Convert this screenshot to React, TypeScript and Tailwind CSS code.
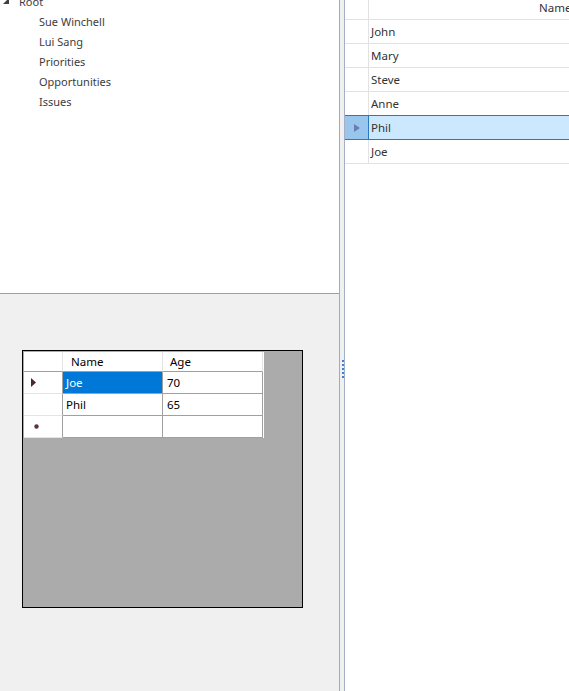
import React from "react";

const font = { fontFamily: '"Segoe UI", "Noto Sans", "Open Sans", sans-serif' };

function TreeRow({ label, indent }: { label: string; indent: boolean }) {
  return (
    <div className="h-[20px] flex items-center">
      {indent ? (
        <div className="w-[39px]" />
      ) : (
        <div className="w-[19px] flex items-center pl-[3px]">
          <svg width="6" height="6" viewBox="0 0 6 6">
            <polygon points="6,0 6,6 0,6" fill="#404040" />
          </svg>
        </div>
      )}
      <span className="text-[11px] text-[#3c3c3c] leading-none">{label}</span>
    </div>
  );
}

function RightRow({ name, selected }: { name: string; selected?: boolean }) {
  if (selected) {
    return (
      <div className="h-[25px] flex border-y border-[#2b78c0] bg-[#cce8ff] -mt-[1px]">
        <div className="w-[24px] bg-[#99c6ec] border-r border-[#2b78c0] flex items-center justify-center">
          <svg width="6" height="8" viewBox="0 0 6 8">
            <polygon points="0,0 6,4 0,8" fill="#6a7db3" />
          </svg>
        </div>
        <div className="flex-1 flex items-center pl-[2px] text-[11.5px] text-[#333]">{name}</div>
      </div>
    );
  }
  return (
    <div className="h-[24px] flex border-b border-[#e2e2e2]">
      <div className="w-[24px] border-r border-[#e2e2e2]" />
      <div className="flex-1 flex items-center pl-[2px] text-[11.5px] text-[#333]">{name}</div>
    </div>
  );
}

export default function App() {
  return (
    <div className="w-[569px] h-[691px] flex bg-[#f0f0f0] overflow-hidden" style={font}>
      {/* Left panel */}
      <div className="w-[340px] flex flex-col border-r border-[#a3aab8]">
        <div className="h-[294px] bg-white border-b border-[#a0a0a0] overflow-hidden">
          <div className="-mt-[9px]">
            <TreeRow label="Root" indent={false} />
            <TreeRow label="Sue Winchell" indent />
            <TreeRow label="Lui Sang" indent />
            <TreeRow label="Priorities" indent />
            <TreeRow label="Opportunities" indent />
            <TreeRow label="Issues" indent />
          </div>
        </div>
        <div className="flex-1 pt-[56px] pl-[22px]">
          <div className="w-[281px] h-[258px] border-[1.5px] border-black bg-[#ababab] p-[1px]">
            <div className="w-[240px] bg-white">
              <div className="grid grid-cols-[39px_100px_100px] text-[11.5px] text-black">
                {/* header */}
                <div className="h-[20px] border-r border-[#e4e4e4] border-b border-b-[#a0a0a0]" />
                <div className="h-[20px] border-r border-[#e4e4e4] border-b border-b-[#a0a0a0] flex items-center pl-[8px] pt-[1px]">Name</div>
                <div className="h-[20px] border-r border-[#e4e4e4] border-b border-b-[#a0a0a0] flex items-center pl-[7px] pt-[1px]">Age</div>
                {/* row 1 */}
                <div className="h-[22px] border-b border-[#e4e4e4] border-r border-r-[#a0a0a0] flex items-center pl-[7px]">
                  <svg width="5" height="9" viewBox="0 0 5 9">
                    <polygon points="0,0 5,4.5 0,9" fill="#4b2636" />
                  </svg>
                </div>
                <div className="h-[22px] border-r border-b border-[#a0a0a0] bg-[#0078d7] text-white flex items-center pl-[3px] pt-[1px]">Joe</div>
                <div className="h-[22px] border-r border-b border-[#a0a0a0] flex items-center pl-[4px] pt-[1px]">70</div>
                {/* row 2 */}
                <div className="h-[22px] border-b border-[#e4e4e4] border-r border-r-[#a0a0a0]" />
                <div className="h-[22px] border-r border-b border-[#a0a0a0] flex items-center pl-[3px] pt-[1px]">Phil</div>
                <div className="h-[22px] border-r border-b border-[#a0a0a0] flex items-center pl-[4px] pt-[1px]">65</div>
                {/* row 3 */}
                <div className="h-[22px] border-b border-[#e4e4e4] border-r border-r-[#a0a0a0] flex items-center pl-[10px]">
                  <svg width="5" height="5" viewBox="0 0 5 5">
                    <circle cx="2.5" cy="2.5" r="2.2" fill="#5a3346" />
                  </svg>
                </div>
                <div className="h-[22px] border-r border-b border-[#a0a0a0]" />
                <div className="h-[22px] border-r border-b border-[#a0a0a0]" />
              </div>
            </div>
          </div>
        </div>
      </div>
      {/* Splitter */}
      <div className="w-[4px] bg-[#f0f0f0] flex flex-col items-center">
        <div className="mt-[360px] flex flex-col gap-[2px] pl-[1px]">
          {[0, 1, 2, 3, 4].map((i) => (
            <div key={i} className="w-[2px] h-[2px] bg-[#3c7fd6]" />
          ))}
        </div>
      </div>
      {/* Right panel */}
      <div className="flex-1 bg-white border-l border-[#a3b0c8] overflow-hidden">
        <div className="-mt-[4px] w-[400px]">
          <div className="h-[24px] flex border-b border-[#e2e2e2]">
            <div className="w-[24px] border-r border-[#e2e2e2]" />
            <div className="flex-1 flex items-center pl-[170px] text-[11.5px] text-[#333]">Name</div>
          </div>
          <RightRow name="John" />
          <RightRow name="Mary" />
          <RightRow name="Steve" />
          <RightRow name="Anne" />
          <RightRow name="Phil" selected />
          <RightRow name="Joe" />
        </div>
      </div>
    </div>
  );
}
